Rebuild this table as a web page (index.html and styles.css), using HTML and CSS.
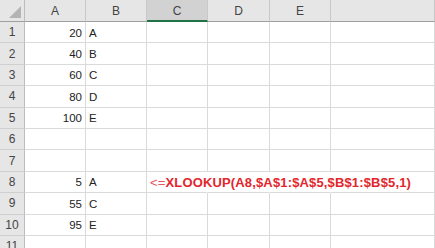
FILE: index.html
```html
<!DOCTYPE html>
<html>
<head>
  <title>Book1</title>
  <link rel="stylesheet" href="styles.css">
</head>
<body>
  <div class="sheet">
    <!-- column headers -->
    <div class="corner"><span class="tri"></span></div>
    <div class="colhead">A</div>
    <div class="colhead">B</div>
    <div class="colhead active">C</div>
    <div class="colhead">D</div>
    <div class="colhead">E</div>
    <div class="colhead"></div>

    <div class="rowhead">1</div><div class="cell num">20</div><div class="cell">A</div><div class="cell"></div><div class="cell"></div><div class="cell"></div><div class="cell"></div>
    <div class="rowhead">2</div><div class="cell num">40</div><div class="cell">B</div><div class="cell"></div><div class="cell"></div><div class="cell"></div><div class="cell"></div>
    <div class="rowhead">3</div><div class="cell num">60</div><div class="cell">C</div><div class="cell"></div><div class="cell"></div><div class="cell"></div><div class="cell"></div>
    <div class="rowhead">4</div><div class="cell num">80</div><div class="cell">D</div><div class="cell"></div><div class="cell"></div><div class="cell"></div><div class="cell"></div>
    <div class="rowhead">5</div><div class="cell num">100</div><div class="cell">E</div><div class="cell"></div><div class="cell"></div><div class="cell"></div><div class="cell"></div>
    <div class="rowhead">6</div><div class="cell"></div><div class="cell"></div><div class="cell"></div><div class="cell"></div><div class="cell"></div><div class="cell"></div>
    <div class="rowhead">7</div><div class="cell"></div><div class="cell"></div><div class="cell"></div><div class="cell"></div><div class="cell"></div><div class="cell"></div>
    <!-- the note in C8 spills over D8:F8, so those gridlines are covered -->
    <div class="rowhead">8</div><div class="cell num">5</div><div class="cell">A</div><div class="cell note"><span class="arrow">&lt;=</span><b>XLOOKUP(A8,$A$1:$A$5,$B$1:$B$5,1)</b></div><div class="cell spill"></div><div class="cell spill"></div><div class="cell"></div>
    <div class="rowhead">9</div><div class="cell num">55</div><div class="cell">C</div><div class="cell"></div><div class="cell"></div><div class="cell"></div><div class="cell"></div>
    <div class="rowhead">10</div><div class="cell num">95</div><div class="cell">E</div><div class="cell"></div><div class="cell"></div><div class="cell"></div><div class="cell"></div>
    <div class="rowhead">11</div><div class="cell"></div><div class="cell"></div><div class="cell"></div><div class="cell"></div><div class="cell"></div><div class="cell"></div>
  </div>
</body>
</html>
```

FILE: styles.css
```css
body {
  margin: 0;
  padding: 0;
  background: #fff;
  font-family: "Liberation Sans", "Noto Sans CJK JP", sans-serif;
  font-size: 11.5px;
  color: #222;
  overflow: hidden;
}
.sheet {
  display: grid;
  grid-template-columns: 25px 61px 61px 61px 62px 61px 1fr;
  grid-template-rows: 22px repeat(11, 21.4px);
  width: 435px;
}
.corner,
.colhead,
.rowhead {
  background: #e6e6e6;
  color: #444;
  display: flex;
  align-items: center;
  justify-content: center;
}
.corner {
  border-right: 1px solid #bdbdbd;
  border-bottom: 1px solid #9f9f9f;
  position: relative;
}
.tri {
  position: absolute;
  right: 3px;
  bottom: 3px;
  width: 0;
  height: 0;
  border-left: 12px solid transparent;
  border-bottom: 12px solid #b4b4b4;
}
.colhead {
  border-right: 1px solid #c8c8c8;
  border-bottom: 1px solid #9f9f9f;
  font-size: 12px;
  padding-top: 1px;
}
.colhead.active {
  background: #d2d2d2;
  border-bottom: 2px solid #217346;
}
.rowhead {
  border-right: 1px solid #bdbdbd;
  border-bottom: 1px solid #cfcfcf;
  font-size: 12px;
}
.cell {
  border-right: 1px solid #dadada;
  border-bottom: 1px solid #dadada;
  display: flex;
  align-items: center;
  padding: 1px 3px 0;
  white-space: nowrap;
}
.num {
  justify-content: flex-end;
}
.note {
  color: #e3262c;
  font-size: 13px;
  letter-spacing: 0.15px;
  position: relative;
  z-index: 1;
  border-right-color: transparent;
}
.note .arrow {
  color: #e8545a;
}
.spill {
  border-right-color: transparent;
}
```
